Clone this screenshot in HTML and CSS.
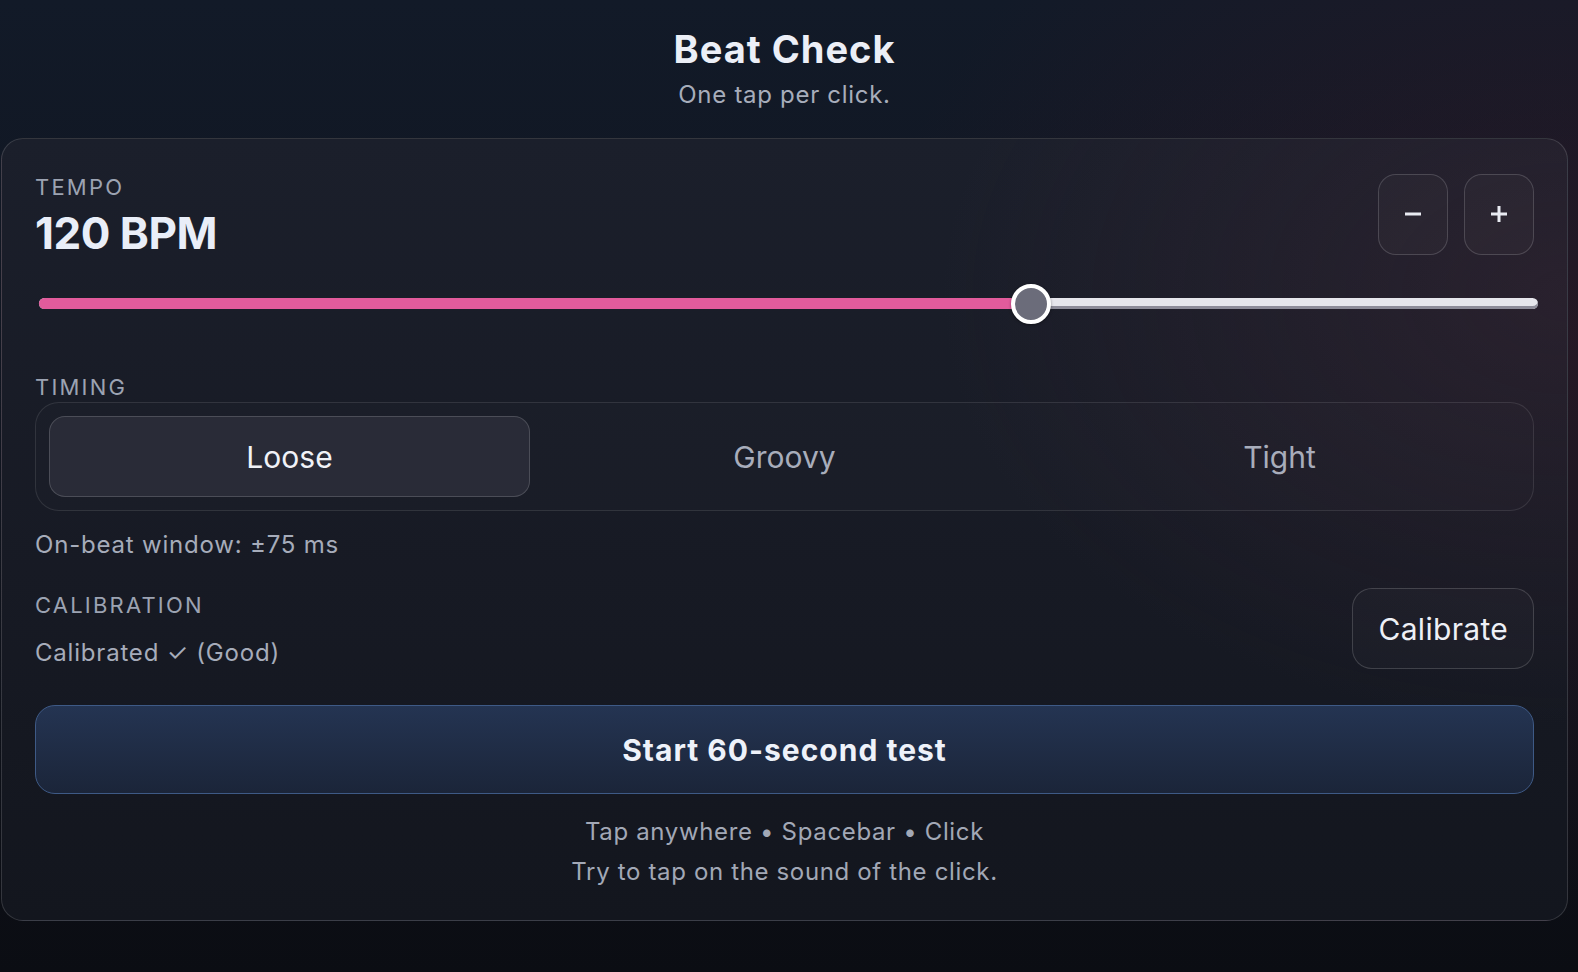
FILE: index.html
```html
<!DOCTYPE html>
<html lang="en">
<head>
<meta charset="utf-8">
<title>Beat Check</title>
<link rel="stylesheet" href="styles.css">
</head>
<body>
<div class="app">
  <header class="header">
    <h1 class="title">Beat Check</h1>
    <p class="subtitle">One tap per click.</p>
  </header>

  <main class="card">
    <section class="tempo-row">
      <div class="tempo-info">
        <div class="label">TEMPO</div>
        <div class="bpm">120 BPM</div>
      </div>
      <div class="step-buttons">
        <button class="icon-btn" aria-label="Decrease tempo">
          <svg width="18" height="18" viewBox="0 0 18 18"><path d="M1 9h16" stroke="#e9ebf2" stroke-width="3" fill="none"/></svg>
        </button>
        <button class="icon-btn" aria-label="Increase tempo">
          <svg width="18" height="18" viewBox="0 0 18 18"><path d="M1 9h16M9 1v16" stroke="#e9ebf2" stroke-width="3" fill="none"/></svg>
        </button>
      </div>
    </section>

    <div class="slider">
      <div class="track"></div>
      <div class="fill" style="width: 992px"></div>
      <div class="thumb" style="left: 972px"></div>
    </div>

    <section class="timing">
      <div class="label">TIMING</div>
      <div class="segmented">
        <button class="segment active">Loose</button>
        <button class="segment">Groovy</button>
        <button class="segment">Tight</button>
      </div>
      <p class="window">On-beat window: ±75 ms</p>
    </section>

    <section class="calibration-row">
      <div class="calibration-info">
        <div class="label">CALIBRATION</div>
        <div class="status">Calibrated ✓ (Good)</div>
      </div>
      <button class="calibrate-btn">Calibrate</button>
    </section>

    <button class="start-btn">Start 60-second test</button>

    <footer class="hints">
      <p>Tap anywhere • Spacebar • Click</p>
      <p>Try to tap on the sound of the click.</p>
    </footer>
  </main>
</div>
</body>
</html>
```

FILE: styles.css
```css
* { box-sizing: border-box; }

html, body {
  margin: 0;
  padding: 0;
  height: 100%;
}

body {
  font-family: "Inter", "Noto Sans", "DejaVu Sans", sans-serif;
  color: #e9ecf4;
  background:
    radial-gradient(ellipse 45% 60% at 100% 35%, rgba(60, 26, 40, 0.45), rgba(60, 26, 40, 0) 100%),
    linear-gradient(180deg, #121a28 0%, #10141e 55%, #0b0d13 100%);
  overflow: hidden;
}

.app {
  width: 1567px;
  margin-left: 1px;
}

.header {
  padding-top: 26px;
  text-align: center;
}

.title {
  margin: 0;
  font-size: 38px;
  line-height: 46px;
  font-weight: 700;
  color: #eceff7;
  letter-spacing: 1px;
}

.subtitle {
  margin: 8px 0 0;
  font-size: 24px;
  line-height: 30px;
  letter-spacing: 0.7px;
  color: #a7adbb;
}

.card {
  margin-top: 28px;
  border: 1px solid rgba(255, 255, 255, 0.14);
  border-radius: 22px;
  padding: 34px 33px 28px;
  background:
    radial-gradient(ellipse 40% 55% at 100% 20%, rgba(70, 40, 55, 0.35), rgba(70, 40, 55, 0) 100%),
    linear-gradient(180deg, #1b1f2b 0%, #171a24 55%, #13161e 100%);
}

.label {
  font-size: 22px;
  line-height: 28px;
  letter-spacing: 2.2px;
  color: #9ca3b2;
}

.tempo-row {
  display: flex;
  align-items: center;
  justify-content: space-between;
}

.bpm {
  margin-top: 6px;
  font-size: 44px;
  line-height: 52px;
  font-weight: 700;
  letter-spacing: -0.5px;
  color: #e9eef8;
}

.step-buttons {
  display: flex;
  gap: 16px;
  margin-bottom: 4px;
}

.icon-btn {
  width: 70px;
  height: 81px;
  border-radius: 18px;
  border: 1px solid rgba(255, 255, 255, 0.16);
  background: rgba(255, 255, 255, 0.025);
  display: flex;
  align-items: center;
  justify-content: center;
  padding: 0;
}

.slider {
  position: relative;
  height: 40px;
  margin: 25px -4px 0 4px;
}

.track {
  position: absolute;
  left: 0;
  right: 0;
  top: 14px;
  height: 11px;
  border-radius: 6px;
  background: #e6e6ec;
  box-shadow: inset 0 -3px 0 #8d8c99;
}

.fill {
  position: absolute;
  left: 0;
  top: 14px;
  height: 11px;
  border-radius: 6px 0 0 6px;
  background: #e25b9c;
}

.thumb {
  position: absolute;
  top: 0;
  width: 40px;
  height: 40px;
  border-radius: 50%;
  background: #6b6c7a;
  border: 4px solid #ffffff;
  box-shadow: 0 1px 3px rgba(0, 0, 0, 0.4);
}

.timing {
  margin-top: 49px;
}

.segmented {
  margin-top: 1px;
  display: grid;
  grid-template-columns: repeat(3, 1fr);
  gap: 14px;
  padding: 13px;
  border: 1px solid rgba(255, 255, 255, 0.1);
  border-radius: 24px;
  background: rgba(255, 255, 255, 0.01);
}

.segment {
  height: 81px;
  border-radius: 16px;
  border: 1px solid transparent;
  background: transparent;
  font-family: inherit;
  font-size: 30px;
  color: #a8adbb;
  padding: 0;
}

.segment.active {
  background: #292b37;
  border-color: rgba(255, 255, 255, 0.16);
  color: #f0f2f7;
}

.window {
  margin: 19px 0 0;
  font-size: 24px;
  line-height: 30px;
  letter-spacing: 0.8px;
  color: #a6acba;
}

.calibration-row {
  margin-top: 29px;
  display: flex;
  align-items: center;
  justify-content: space-between;
}

.status {
  margin-top: 19px;
  font-size: 24px;
  line-height: 30px;
  letter-spacing: 0.8px;
  color: #a6acba;
}

.calibrate-btn {
  height: 81px;
  padding: 0 25px;
  margin: -1px 0 1px;
  border-radius: 20px;
  border: 1px solid rgba(255, 255, 255, 0.16);
  background: rgba(255, 255, 255, 0.02);
  font-family: inherit;
  font-size: 30px;
  letter-spacing: 0.3px;
  color: #eef0f6;
}

.start-btn {
  display: block;
  width: 100%;
  height: 89px;
  margin-top: 35px;
  border-radius: 20px;
  border: 1.5px solid #3e5a86;
  background: linear-gradient(180deg, #243452 0%, #1b2539 100%);
  font-family: inherit;
  font-size: 30px;
  font-weight: 700;
  letter-spacing: 1px;
  color: #eef2fa;
}

.hints {
  margin-top: 18px;
  text-align: center;
}

.hints p {
  margin: 0;
  font-size: 24px;
  line-height: 40px;
  letter-spacing: 0.65px;
  color: #a2a8b6;
}
```
